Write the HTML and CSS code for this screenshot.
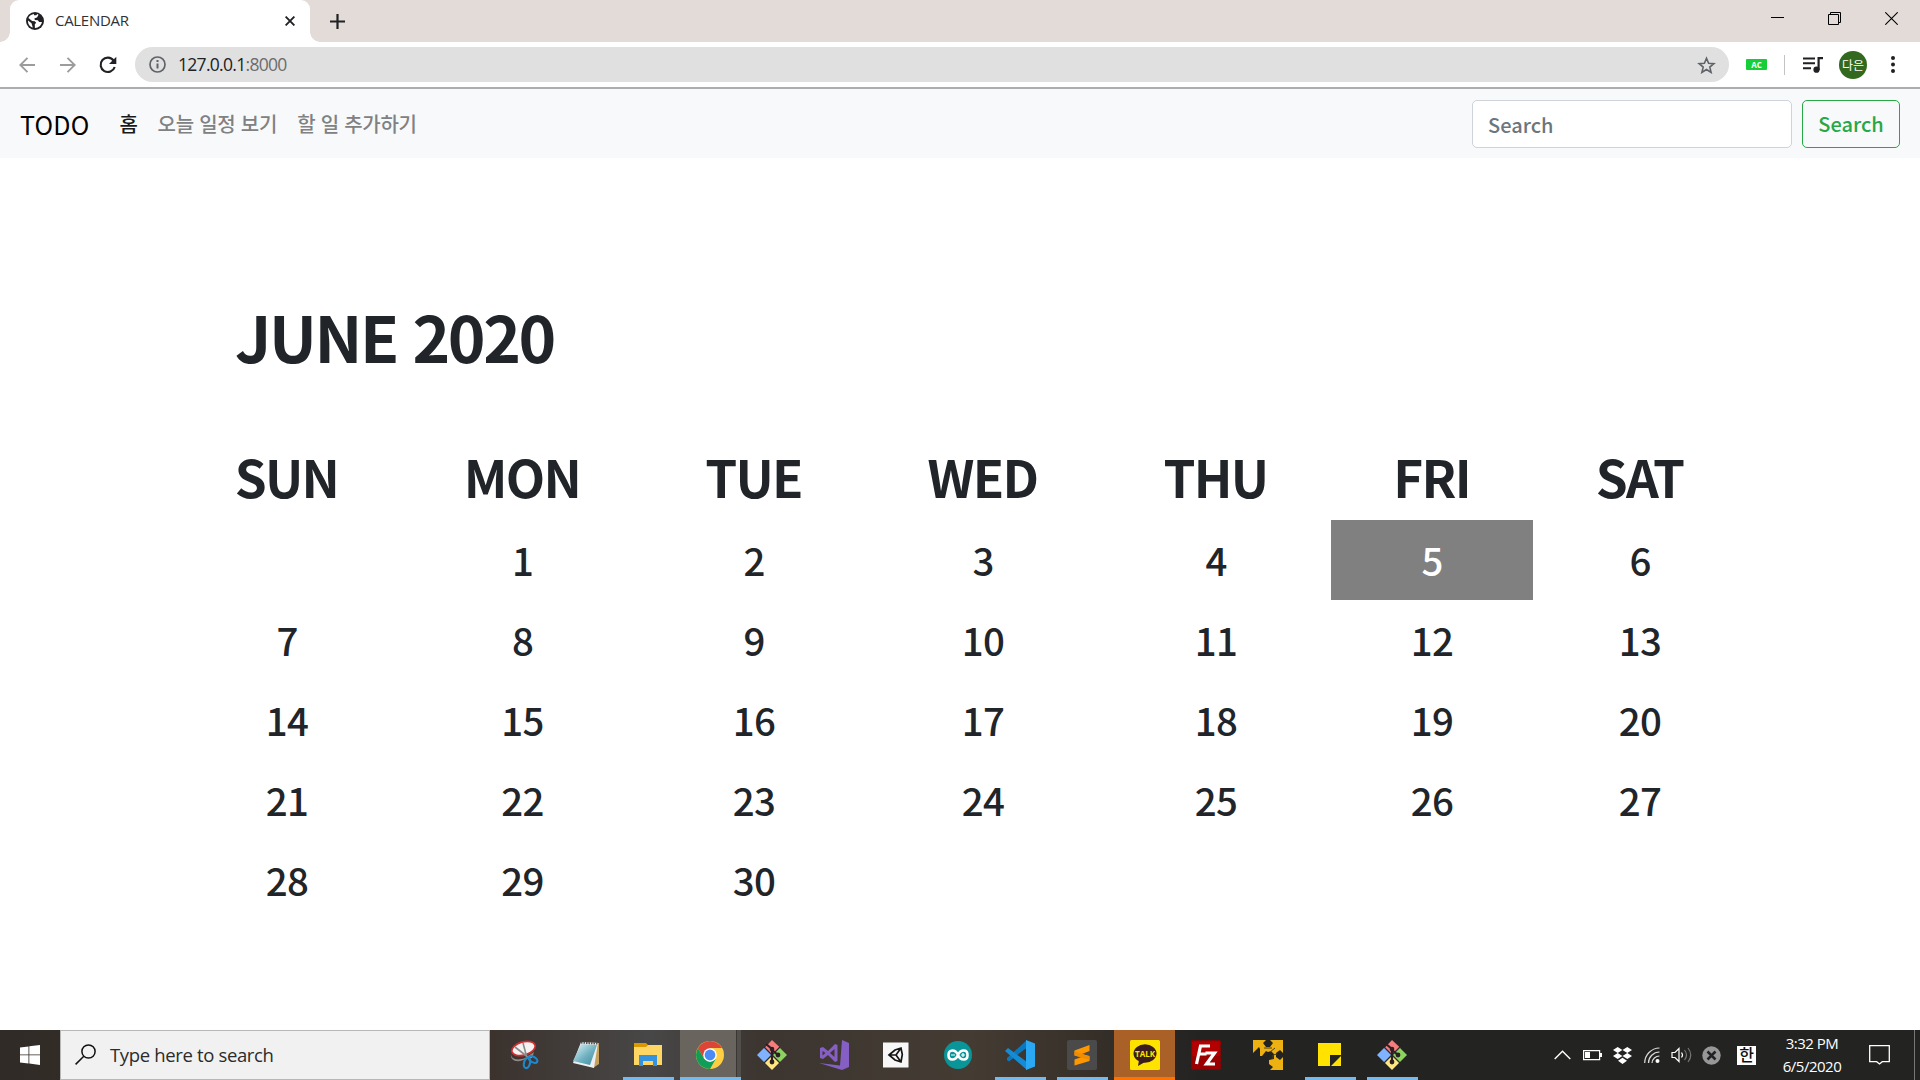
FILE: index.html
```html
<!DOCTYPE html>
<html lang="ko">
<head>
<meta charset="utf-8">
<title>CALENDAR</title>
<link rel="stylesheet" href="styles.css">
</head>
<body>
<svg class="defs" width="0" height="0" aria-hidden="true">
  <symbol id="git" viewBox="0 0 30 30">
    <path fill="#f67c7e" d="M15 0l8.500 8-8.500 7-7.500-7z"/><path fill="#80b3ff" d="M0 15l7.500-7.500 7 7.500-7 7.500z"/>
    <path fill="#8dd35f" d="M30 15l-7.500-7.500-7 7.500 7 7.500z"/><path fill="#ffe680" d="M15 30l-7.500-7.500 7.500-7 7.500 7z"/>
    <path d="M7 7l16 16M23 7L7 23" stroke="#2d2b29" stroke-width="1.200"/>
    <path d="M9 4l6 5v13M15 10l6 5" fill="none" stroke="#2b2023" stroke-width="2.200"/>
    <g fill="#2b2023"><circle cx="15" cy="9" r="2.300"/><circle cx="21" cy="15" r="2.400"/><circle cx="15" cy="22" r="2.400"/></g>
  </symbol>
</svg>

<header class="tabs">
  <div class="tab">
    <svg class="favicon" width="18" height="18" viewBox="0 0 18 18"><circle cx="9" cy="9" r="9" fill="#202124"/><path fill="#fff" d="M8 2C5.500 2.300 3.300 3.800 2.400 6l3.800 3 2.500.2 1.500 1.500-1.400 1.500.1 3.700c3.500.2 6.500-2.300 7-5.800l-2.700-.2-1.400-1.700-3-.2-.3-1.700 2.500-.8 1.500-2.700-1.200-.7-1 1.200H8z"/><path fill="#fff" d="M2 8.500l3.500 2.700 1.300 4.400C4 15 1.800 12.300 2 8.500z"/></svg>
    <span class="tab-title">CALENDAR</span>
    <svg width="10" height="10" viewBox="0 0 10 10"><path d="M.6.6l8.800 8.800M9.400.6L.6 9.400" stroke="#202124" stroke-width="1.900"/></svg>
  </div>
  <svg class="new-tab" width="15" height="15" viewBox="0 0 15 15"><path d="M7.500 0v15M0 7.500h15" stroke="#202124" stroke-width="2.200"/></svg>
  <div class="window-controls">
    <svg width="13" height="13" viewBox="0 0 13 13"><path d="M0 5.500h13" stroke="#000"/></svg>
    <svg width="13" height="13" viewBox="0 0 13 13"><path d="M.5 2.500h10v10H.5zM2.500 2.500v-2h10v10h-2" fill="none" stroke="#000"/></svg>
    <svg width="13" height="13" viewBox="0 0 13 13"><path d="M.3.3l12.400 12.400M12.700.3L.3 12.700" stroke="#000" stroke-width="1.100"/></svg>
  </div>
</header>

<div class="toolbar">
  <svg class="back" width="16" height="16" viewBox="0 0 16 16"><path d="M16 8H1.500M8.500.8L1.300 8l7.200 7.200" fill="none" stroke="#9c9c9c" stroke-width="1.900"/></svg>
  <svg class="forward" width="16" height="16" viewBox="0 0 16 16"><path d="M0 8h14.500M7.500.8L14.700 8l-7.200 7.200" fill="none" stroke="#9c9c9c" stroke-width="1.900"/></svg>
  <svg class="reload" width="18" height="18" viewBox="0 0 18 18"><path d="M14.600 4.500A7.200 7.200 0 1 0 15.700 11" fill="none" stroke="#202124" stroke-width="2.100"/><path d="M17.300.8v7.300H10z" fill="#202124"/></svg>
  <div class="address">
    <svg width="17" height="17" viewBox="0 0 17 17"><circle cx="8.500" cy="8.500" r="7.500" fill="none" stroke="#5f6368" stroke-width="1.700"/><path d="M8.500 7.500v5M8.500 4v2" stroke="#5f6368" stroke-width="2"/></svg>
    <span class="url">127.0.0.1<span class="port">:8000</span></span>
    <svg width="19" height="18" viewBox="0 0 19 18"><path d="M9.500 2.200l2.100 5 5.300.4-4.100 3.500 1.300 5.300-4.600-2.900-4.600 2.900 1.300-5.300-4.100-3.500 5.300-.4z" fill="none" stroke="#5f6368" stroke-width="1.600"/></svg>
  </div>
  <span class="extension">AC</span>
  <span class="divider"></span>
  <svg class="playlist" width="20" height="16" viewBox="0 0 20 16"><path d="M0 1.500h12M0 6.300h12M0 11.200h8" stroke="#202124" stroke-width="2"/><circle cx="13.500" cy="12.700" r="3.100" fill="#202124"/><path d="M15.600 13V1.200H20" fill="none" stroke="#202124" stroke-width="2.200"/></svg>
  <span class="avatar">다은</span>
  <svg class="more" width="4" height="17" viewBox="0 0 4 17" fill="#202124"><circle cx="2" cy="2" r="2"/><circle cx="2" cy="8.500" r="2"/><circle cx="2" cy="15" r="2"/></svg>
</div>

<nav class="navbar">
  <a class="brand">TODO</a>
  <a class="nav-link active">홈</a>
  <a class="nav-link">오늘 일정 보기</a>
  <a class="nav-link">할 일 추가하기</a>
  <form class="search-form">
    <input class="search-input" type="text" placeholder="Search">
    <button class="search-button" type="button">Search</button>
  </form>
</nav>

<main class="page">
  <h1 class="month">JUNE 2020</h1>
  <table class="calendar">
    <colgroup><col class="sun"><col class="mon"><col class="tue"><col class="wed"><col class="thu"><col class="fri"><col class="sat"></colgroup>
    <thead><tr><th>SUN</th><th>MON</th><th>TUE</th><th>WED</th><th>THU</th><th>FRI</th><th>SAT</th></tr></thead>
    <tbody>
      <tr><td></td><td>1</td><td>2</td><td>3</td><td>4</td><td class="today">5</td><td>6</td></tr>
      <tr><td>7</td><td>8</td><td>9</td><td>10</td><td>11</td><td>12</td><td>13</td></tr>
      <tr><td>14</td><td>15</td><td>16</td><td>17</td><td>18</td><td>19</td><td>20</td></tr>
      <tr><td>21</td><td>22</td><td>23</td><td>24</td><td>25</td><td>26</td><td>27</td></tr>
      <tr><td>28</td><td>29</td><td>30</td><td></td><td></td><td></td><td></td></tr>
    </tbody>
  </table>
</main>

<footer class="taskbar">
  <div class="start"><svg width="20" height="20" viewBox="0 0 20 20" fill="#fff"><path d="M0 2.600l8.500-1.200v8H0zM9.300 1.200L20 0v9.400H9.300zM0 10.300h8.500v8.100L0 17.400zM9.300 10.300H20V20L9.300 18.600z"/></svg></div>
  <div class="taskbar-search">
    <svg width="21" height="21" viewBox="0 0 21 21"><circle cx="13.500" cy="7.500" r="6.600" fill="none" stroke="#111" stroke-width="1.500"/><path d="M8.800 12.200L.6 20.400" stroke="#111" stroke-width="1.500"/></svg>
    <span>Type here to search</span>
  </div>
  <div class="apps">
    <div class="app"><svg width="30" height="30" viewBox="0 0 30 30"><path d="M2 14c0 5 6 7 14 4l9-6-2 6-9 2c-7 3-13 0-12-6z" fill="#8f8987"/><ellipse cx="14.500" cy="8.500" rx="12" ry="6.600" transform="rotate(-16 14.500 8.500)" fill="#f5f3f1" stroke="#d32c30" stroke-width="1.700"/><path d="M6 7l14 11M14 3l4 15" stroke="#8b8b8b" stroke-width="1.600"/><g fill="none" stroke="#1c88cf" stroke-width="2.200"><ellipse cx="18" cy="23" rx="3" ry="5.200" transform="rotate(15 18 23)"/><ellipse cx="24" cy="19.500" rx="4.800" ry="2.700" transform="rotate(30 24 19.500)"/></g></svg></div>
    <div class="app"><svg width="30" height="30" viewBox="0 0 30 30"><defs><linearGradient id="note" x2="1" y2="1"><stop stop-color="#e7f7f9"/><stop offset=".55" stop-color="#70b1c1"/><stop offset="1" stop-color="#378ba0"/></linearGradient></defs><path d="M11 2l17 1v21l-6 4z" fill="#c5a15d"/><path d="M10 2l17 1-4 25-21-5z" fill="#eee"/><path d="M10 4l16 1-7 20-17-4z" fill="url(#note)"/><path d="M10 2.600l17 1" stroke="#555" stroke-width="2" stroke-dasharray="1.500 1"/></svg></div>
    <div class="app open"><svg width="30" height="30" viewBox="0 0 30 30"><path d="M1 3h12l2 2v5H1z" fill="#d99a00"/><path d="M1 7h12l2-2h14v20H1z" fill="#ffd664"/><path d="M6 26V15h18v11h-4v-5H10v5z" fill="#3492df"/></svg></div>
    <div class="app focused"><svg width="28" height="28" viewBox="0 0 28 28"><circle cx="14" cy="14" r="14" fill="#ffcd41"/><path d="M1.900 7A14 14 0 0 1 26.100 7H14L8 17.500z" fill="#db4437"/><path d="M1.900 7A14 14 0 0 0 14 28l6-10.500-6 3.500-6-3.500z" fill="#109d58"/><circle cx="14" cy="14" r="6.800" fill="#fff"/><circle cx="14" cy="14" r="5.400" fill="#4a8af4"/></svg></div>
    <div class="app"><svg width="30" height="30"><use href="#git"/></svg></div>
    <div class="app"><svg width="30" height="30" viewBox="0 0 30 30" fill="#865fc5"><path d="M23 0l7 3v24l-7 3-23-7 21 2.500z"/><path fill-rule="evenodd" d="M1 8l3-1 5 4 7-7 2.500 1v16L16 22l-7-7-5 4-3-1zm2.500 3v4.500L6.500 13zM11 13l4.500 4V9z"/></svg></div>
    <div class="app"><svg width="26" height="26" viewBox="0 0 26 26"><rect y="0.500" width="25.500" height="25" fill="#f7f7f7"/><path d="M6 13l6-5 6-2 1.300 6.500L18 20l-6-2zM6 13h7l5-7M13 13l5 7" fill="none" stroke="#151515" stroke-width="1.700"/></svg></div>
    <div class="app"><svg width="28" height="28" viewBox="0 0 28 28"><circle cx="14" cy="14" r="14" fill="#0a9598"/><path d="M14 14c-2.500-6-9.500-6-9.500 0s7 6 9.500 0 9.500-6 9.500 0-7 6-9.500 0z" fill="none" stroke="#fff" stroke-width="2.600"/><path d="M7 14h4M17 14h4M19 12v4" stroke="#fff" stroke-width="1.200"/></svg></div>
    <div class="app open"><svg width="30" height="30" viewBox="0 0 30 30"><path d="M22 0l-20 18v2l2 1.500L22 7.500z" fill="#0b77bd"/><path d="M22 30L0 11l3-3 19 14z" fill="#148bd4"/><path d="M21 0l9 3.500v23L21 30z" fill="#2aa8f3"/></svg></div>
    <div class="app open"><svg width="30" height="30" viewBox="0 0 30 30"><rect width="30" height="30" rx="2" fill="#4a4a4a"/><path d="M7.500 10.500L22.500 5v6L15 14l7.500 2v5L7.500 25.500v-6l7-2.500-7-1.500z" fill="#ff9800"/><path d="M7.500 11l15 5.500v3.500l-15-4.500z" fill="#f08c00"/></svg></div>
    <div class="app alert"><svg width="30" height="30" viewBox="0 0 30 30"><rect width="30" height="30" rx="1.500" fill="#ffe300"/><ellipse cx="15" cy="13.500" rx="11.500" ry="9.200" fill="#3b1d1f"/><path d="M9 20l-1 6 7-4z" fill="#3b1d1f"/><text x="15" y="16.500" class="talk">TALK</text></svg></div>
    <div class="app"><svg width="30" height="30" viewBox="0 0 30 30"><rect x=".7" y=".7" width="28.600" height="28.600" fill="#b30000" stroke="#940000" stroke-width="1.400" stroke-dasharray="2 1.200"/><path d="M1 16h28v13H1z" fill="#8b0000" opacity=".6"/><path d="M5.500 24L9.500 6H19M7.500 14h8" fill="none" stroke="#fff" stroke-width="3.200"/><path d="M14.500 13h9L15.500 24H24" fill="none" stroke="#fff" stroke-width="3.200"/></svg></div>
    <div class="app"><svg width="30" height="30" viewBox="0 0 30 30" fill="#edb111"><path d="M0 0h13l-3 3 3 4h4l3-4-3-3h13v13l-3-3-4 3v4l4 3 3-3v13H17l3-3-4-3v-4l5-1v-5l-3-3-3 1-2-1-4 5H7V9L6 7l-3 3-3 3z"/><path d="M22 8l-5 4M11 8h8M24 14l-4 1v4" stroke="#51400f" stroke-width="1" fill="none"/></svg></div>
    <div class="app open"><svg width="24" height="24" viewBox="0 0 24 24"><path d="M0 0h23v12H12v11H0z" fill="#ffe200"/><path d="M13 23l10-10v10z" fill="#ffe200"/></svg></div>
    <div class="app open"><svg width="30" height="30"><use href="#git"/></svg></div>
  </div>
  <div class="tray">
    <svg width="17" height="10" viewBox="0 0 17 10"><path d="M.7 9l7.800-7.800L16.300 9" fill="none" stroke="#fff" stroke-width="1.400"/></svg>
    <svg width="19" height="12" viewBox="0 0 19 12"><path d="M.6 1.600h16v9H.6z" fill="none" stroke="#fff" stroke-width="1.200"/><path d="M2 3h5v6H2zM17 4h2v4h-2z" fill="#fff"/></svg>
    <svg width="19" height="17" viewBox="0 0 19 17" fill="#fff"><path d="M4.700 0l4.700 3-4.700 3L0 3zM14.300 0L19 3l-4.700 3-4.800-3zM4.700 6l4.700 3-4.700 3L0 9zM14.300 6L19 9l-4.700 3-4.800-3zM9.500 10.800l4.500 3L9.500 17 5 13.800z"/></svg>
    <svg class="low" width="16" height="16" viewBox="0 0 16 16"><g fill="none" stroke="#ddd" stroke-width="1.200"><path d="M.7 16A15 15 0 0 1 15.500 1M4.500 16A11 11 0 0 1 15.500 5M8 16a7.500 7.500 0 0 1 7.500-7"/></g><circle cx="13.500" cy="14" r="2" fill="#fff"/></svg>
    <svg width="22" height="18" viewBox="0 0 22 18" fill="none" stroke="#fff" stroke-width="1.200"><path d="M1 6.500h3L8 2.500v13l-4-4H1z"/><path d="M10.500 6.500q2 2.500 0 5"/><path d="M13.500 4q4 5 0 10M17 2q5.500 7 0 14" stroke="#777"/></svg>
    <svg width="19" height="19" viewBox="0 0 19 19"><circle cx="9.500" cy="9.500" r="9.200" fill="#979797"/><path d="M5.500 5.500l8 8M13.500 5.500l-8 8" stroke="#222" stroke-width="2.500"/></svg>
    <span class="ime">한</span>
    <div class="clock"><span>3:32 PM</span><span>6/5/2020</span></div>
    <svg class="notify" width="21" height="20" viewBox="0 0 21 20"><path d="M.7.7h19.600v16h-7L10.500 19l-2.800-2.300h-7z" fill="none" stroke="#fff" stroke-width="1.300"/></svg>
  </div>
</footer>
</body>
</html>
```
FILE: styles.css
```css
* { box-sizing: border-box; }
body {
  margin: 0;
  width: 1920px;
  height: 1080px;
  overflow: hidden;
  display: flex;
  flex-direction: column;
  background: #fff;
  color: #212529;
  font-family: "Noto Sans CJK KR", sans-serif;
  font-size: 20px;
  font-weight: 500;
}
svg { display: block; flex: none; }
.defs { position: absolute; }

.tabs { height: 42px; flex: none; display: flex; align-items: center; background: #e3dbd8; padding-left: 10px; }
.tab {
  position: relative;
  width: 300px;
  height: 42px;
  display: flex;
  align-items: center;
  padding: 0 15px 0 16px;
  background: #fff;
  border-radius: 9px 9px 0 0;
}
.tab::before, .tab::after { content: ""; position: absolute; bottom: 0; width: 10px; height: 10px; }
.tab::before { left: -10px; background: radial-gradient(circle at 0 0, transparent 9.5px, #fff 10px); }
.tab::after { right: -10px; background: radial-gradient(circle at 100% 0, transparent 9.5px, #fff 10px); }
.tab-title { flex: 1; padding: 0 0 2px 11px; font: 400 15px "Open Sans", sans-serif; letter-spacing: -.3px; color: #303134; }
.new-tab { margin-left: 20px; }
.window-controls { display: flex; gap: 44px; margin: -5px 22px 0 auto; }

.toolbar { height: 47px; flex: none; display: flex; align-items: center; border-bottom: 2px solid #adadad; padding-left: 19px; }
.forward { margin-left: 25px; }
.reload { margin-left: 23px; }
.address { width: 1594px; height: 35px; margin-left: 18px; padding: 0 13px 0 14px; display: flex; align-items: center; background: #e0e0e0; border-radius: 18px; }
.url { flex: 1; padding: 0 0 2px 12px; font: 400 17.5px "Open Sans", sans-serif; letter-spacing: -.7px; color: #202124; }
.port { color: #6b6c6e; }
.extension { width: 21px; height: 11px; margin-left: 17px; border-radius: 1px; background: #14cf37; color: #fff; font: 700 8px/11px "Open Sans", sans-serif; text-align: center; }
.divider { width: 1px; height: 20px; margin-left: 17px; background: #c4c4c4; }
.playlist { margin-left: 18px; }
.avatar { width: 28px; height: 28px; margin-left: 16px; border-radius: 50%; background: #33691e; color: #fff; font-size: 12px; font-weight: 400; line-height: 27px; text-align: center; }
.more { margin-left: 24px; }

.navbar { height: 69px; flex: none; display: flex; align-items: center; padding: 0 20px; background: #f8f9fa; }
.brand { margin-right: 20px; font-size: 25px; font-weight: 400; letter-spacing: .2px; color: #000; }
.nav-link { padding: 0 10px; color: #808182; letter-spacing: -.25px; }
.nav-link.active { color: #18191a; }
.search-form { display: flex; gap: 10px; margin-left: auto; }
.search-input { width: 320px; height: 48px; padding: 2px 15px 0; border: 1px solid #ced4da; border-radius: 5px; background: #fff; font: inherit; }
.search-input::placeholder { color: #6c757d; opacity: 1; }
.search-button { width: 98px; height: 48px; padding: 0; border: 1px solid #28a745; border-radius: 5px; background: transparent; color: #28a745; font: inherit; }

.page { flex: 1; padding: 137px 0 0 171px; }
.month { margin: 0 0 63px 64px; font-size: 64px; line-height: 80px; font-weight: 700; letter-spacing: -2.4px; }
.calendar { width: 1575px; margin-left: 1px; table-layout: fixed; border-collapse: collapse; text-align: center; }
.sun, .thu { width: 230px; }
.mon { width: 241px; }
.tue { width: 222px; }
.wed { width: 236px; }
.fri { width: 202px; }
.sat { width: 214px; }
.calendar th { height: 82px; padding: 0 1px 7px 0; font-size: 51.2px; line-height: 64px; font-weight: 700; letter-spacing: -1.7px; }
.calendar td { height: 80px; padding: 0 0 3px; font-size: 38.4px; line-height: 58px; letter-spacing: -.7px; }
.calendar .today { background: #808080; color: #fff; }

.taskbar {
  height: 50px;
  flex: none;
  display: flex;
  background: linear-gradient(90deg, #302b26 0, #3b322d 490px, #484747 650px, #3c3530 760px, #443c33 970px, #373029 1090px, #232322 1200px);
  color: #fff;
}
.start { width: 60px; display: grid; place-items: center; }
.taskbar-search { width: 430px; display: flex; align-items: center; gap: 14px; padding: 0 0 2px 14px; background: #f1f1f1; border: 1px solid #b7b7b7; color: #2b2b2b; font: 400 18.5px "Open Sans", sans-serif; letter-spacing: -.35px; }
.apps { display: flex; padding-left: 3px; }
.app { position: relative; width: 62px; height: 50px; display: grid; place-items: center; }
.open::after { content: ""; position: absolute; left: 6px; bottom: 0; width: 51px; height: 3px; background: #76b9ed; }
.focused { background: linear-gradient(90deg, transparent 1px, #69645e 1px 57px, #393633 57px 58px, #524e4a 58px); background-size: 62px 50px; }
.focused::after { content: ""; position: absolute; left: 1px; bottom: 0; width: 61px; height: 3px; background: #76b9ed; }
.alert { background: linear-gradient(#a96128 47px, #ff7200 47px); background-clip: content-box; padding-left: 1px; }
.talk { font: 700 8px "Open Sans", sans-serif; fill: #ffe300; text-anchor: middle; }
.tray { width: 368px; margin-left: auto; margin-right: 5px; display: grid; grid-template-columns: 30px 31px 28px 32px 28px 30px 41px 90px 57px; align-items: center; justify-items: center; border-right: 1px solid #777; }
.ime { width: 19px; height: 19px; background: #fff; color: #111; font-size: 16px; line-height: 17px; text-align: center; }
.clock { display: grid; grid-template-rows: 23px 23px; text-align: center; font: 400 15px/23px "Open Sans", sans-serif; letter-spacing: -.5px; }
.notify { justify-self: start; margin-left: 12px; }
```
